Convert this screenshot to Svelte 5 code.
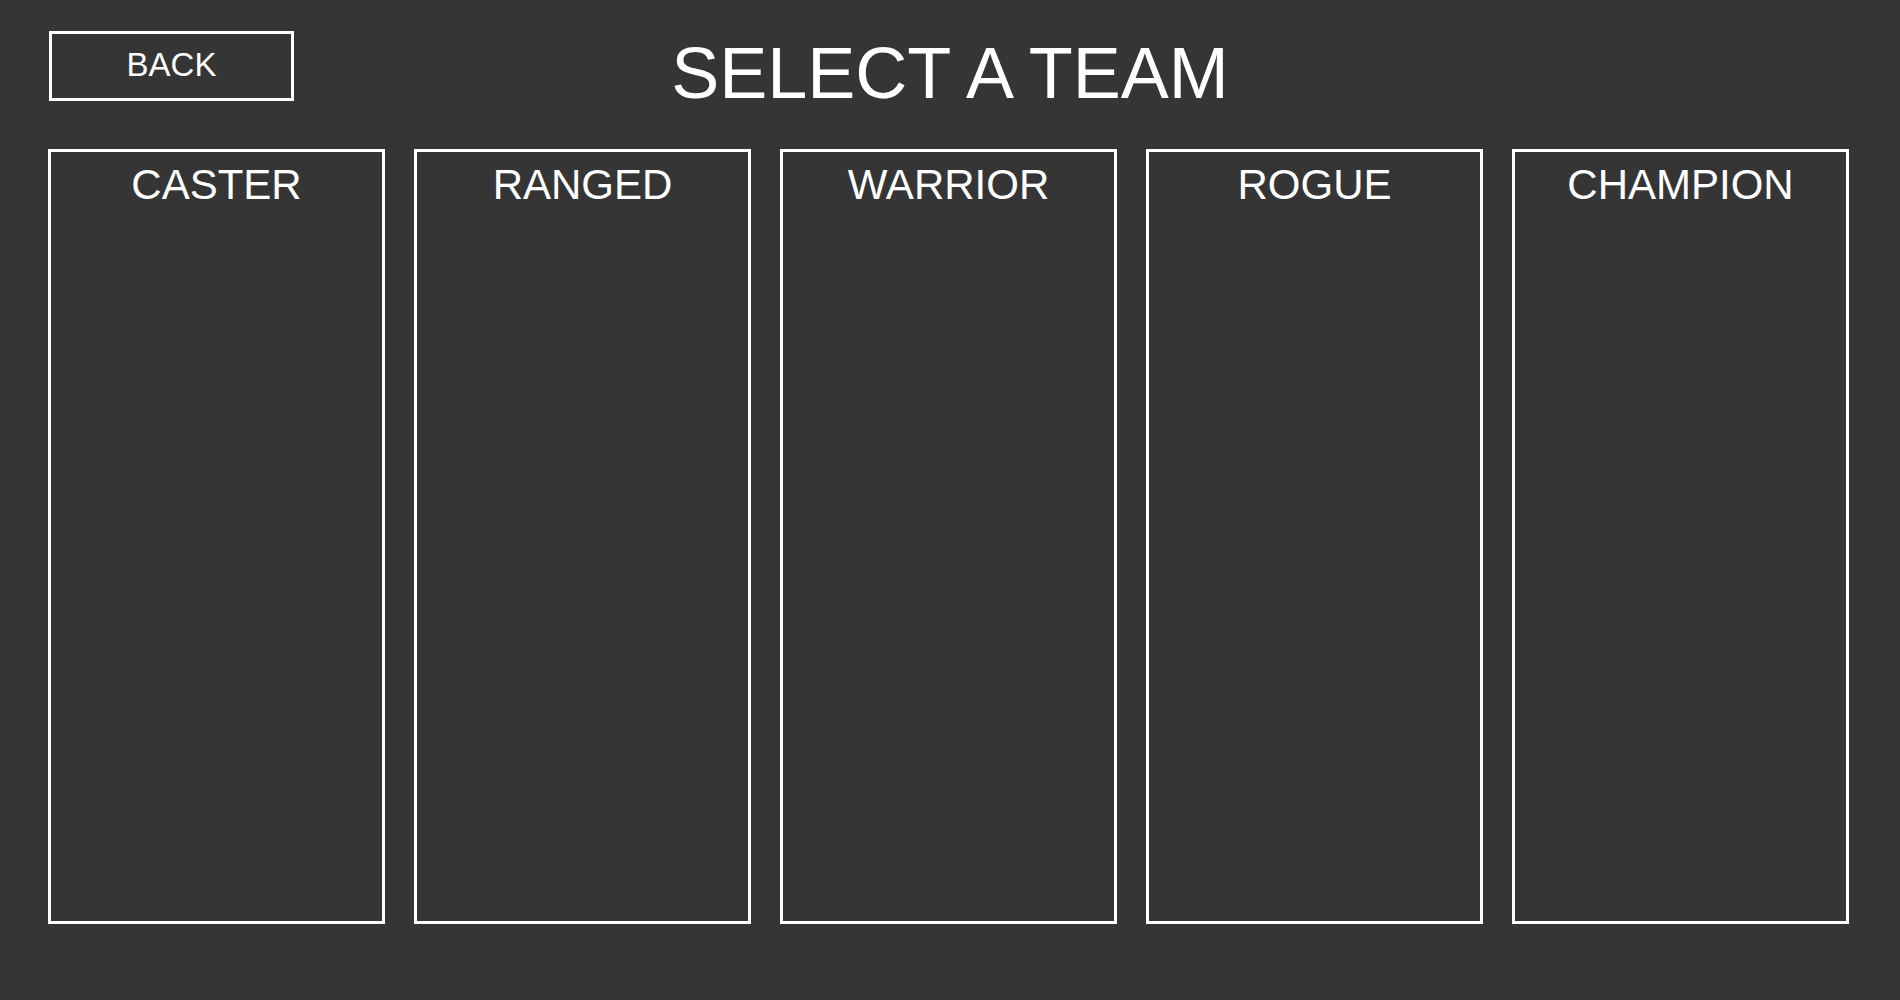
<script>
  const teams = ['CASTER', 'RANGED', 'WARRIOR', 'ROGUE', 'CHAMPION'];
</script>

<main class="page">
  <header class="header">
    <button type="button" class="back">BACK</button>
    <h1 class="title">SELECT A TEAM</h1>
  </header>
  <div class="teams">
    {#each teams as team}
      <section class="team">
        <h2 class="team-name">{team}</h2>
      </section>
    {/each}
  </div>
</main>

<style>
  :global(body) {
    margin: 0;
    background: #353535;
  }

  .page {
    box-sizing: border-box;
    display: flex;
    flex-direction: column;
    gap: 34px;
    min-height: 100vh;
    padding: 31px 0 76px;
    background: #353535;
    color: #fff;
    font-family: 'Liberation Sans', Arial, sans-serif;
  }

  .header {
    display: grid;
    grid-template-columns: 1fr auto 1fr;
    align-items: start;
    padding: 0 49px;
  }

  .back {
    box-sizing: border-box;
    justify-self: start;
    width: 245px;
    height: 70px;
    padding: 0 0 2px;
    border: 3px solid #fff;
    background: transparent;
    color: inherit;
    font: inherit;
    font-size: 33px;
    line-height: 40px;
    cursor: pointer;
  }

  .title {
    margin: 0;
    font-size: 72px;
    font-weight: 400;
    line-height: 84px;
    white-space: nowrap;
  }

  .teams {
    flex: 1;
    display: grid;
    grid-template-columns: repeat(5, minmax(0, 1fr));
    gap: 29px;
    padding: 0 51px 0 48px;
  }

  .team {
    padding-top: 9px;
    border: 3px solid #fff;
  }

  .team-name {
    margin: 0;
    font-size: 42px;
    font-weight: 400;
    line-height: 48px;
    text-align: center;
  }
</style>
